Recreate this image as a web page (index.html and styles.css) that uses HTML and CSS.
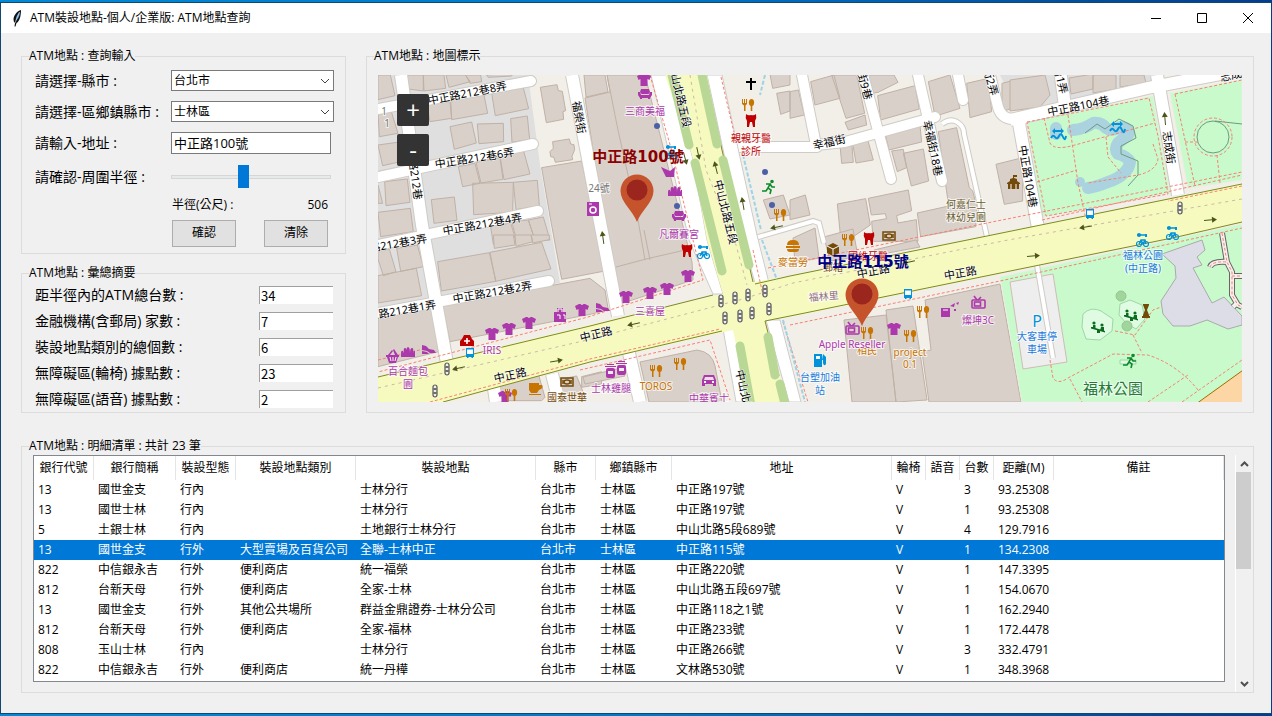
FILE: index.html
```html
<!DOCTYPE html>
<html lang="zh-Hant">
<head>
<meta charset="utf-8">
<title>ATM裝設地點-個人/企業版: ATM地點查詢</title>
<link rel="stylesheet" href="styles.css">
</head>
<body>
<div class="window">
  <header class="titlebar">
    <svg class="feather" viewBox="0 0 10 18" aria-hidden="true"><path d="M9 1C5 2 2 6 1.500 10c0 2 .5 3 1.500 4l-.5 3.500h1L4.500 14C7 13 9 8 9 1z" fill="#111"/><path d="M8 3C5 5 4 8 3.500 12 6 10 8 7 8 3z" fill="#5b9bd5"/><path d="M7.500 3L3 14" stroke="#dcecff" stroke-width=".6"/></svg>
    <h1 class="title">ATM裝設地點-個人/企業版: ATM地點查詢</h1>
    <div class="controls">
      <button type="button" class="control" aria-label="最小化"><svg viewBox="0 0 12 12"><path d="M1 6.500h10"/></svg></button>
      <button type="button" class="control" aria-label="最大化"><svg viewBox="0 0 12 12"><path d="M1.500 1.500h9v9h-9z"/></svg></button>
      <button type="button" class="control" aria-label="關閉"><svg viewBox="0 0 12 12"><path d="M1 1l10 10M11 1L1 11"/></svg></button>
    </div>
  </header>
  <main class="content">
    <div class="upper">
      <div class="side">
        <fieldset class="panel query">
          <legend>ATM地點 : 查詢輸入</legend>
          <label for="city">請選擇-縣市 :</label>
          <div class="select-wrap"><select id="city"><option>台北市</option></select><svg class="chevron" viewBox="0 0 10 6"><path d="M1 1l4 4 4-4"/></svg></div>
          <label for="district">請選擇-區鄉鎮縣市 :</label>
          <div class="select-wrap"><select id="district"><option>士林區</option></select><svg class="chevron" viewBox="0 0 10 6"><path d="M1 1l4 4 4-4"/></svg></div>
          <label for="address">請輸入-地址 :</label>
          <input id="address" class="address" type="text" value="中正路100號">
          <label for="radius">請確認-周圍半徑 :</label>
          <input id="radius" class="slider" type="range" min="100" max="1000" value="506">
          <div class="radius"><span>半徑(公尺) :</span><output for="radius">506</output></div>
          <div class="actions"><button type="button" class="push">確認</button><button type="button" class="push">清除</button></div>
        </fieldset>
        <fieldset class="panel summary">
          <legend>ATM地點 : 彙總摘要</legend>
          <label for="s1">距半徑內的ATM總台數 :</label><input id="s1" type="text" value="34">
          <label for="s2">金融機構(含郵局) 家數 :</label><input id="s2" type="text" value="7">
          <label for="s3">裝設地點類別的總個數 :</label><input id="s3" type="text" value="6">
          <label for="s4">無障礙區(輪椅) 據點數 :</label><input id="s4" type="text" value="23">
          <label for="s5">無障礙區(語音) 據點數 :</label><input id="s5" type="text" value="2">
        </fieldset>
      </div>
      <fieldset class="panel mapbox">
        <legend>ATM地點 : 地圖標示</legend>
        <div class="map">
<svg class="canvas" viewBox="378 75 864 327" role="img" aria-label="地圖">
<defs>
<path id="shirt" d="M-7-4l4-2h1.500q1.500 2 3 0H3l4 2-1.500 4-2-1V6h-7v-7l-2 1z"/>
<g id="food"><path d="M-6-6h1v4h1v-4h1v4h1v-4h1v5l-1.500 1.500V6h-1.500V.5L-6-1z"/><ellipse cx="3.500" cy="-2.500" rx="2.600" ry="3.500"/><path d="M2.700 0h1.600v6H2.700z"/></g>
<g id="sofa"><path d="M-4-5h8l1 3-1.500 2h-7L-5-2z"/><path d="M-7-2h2l1 3h8l1-3h2v3L5 4v1H3V4h-6v1h-2V4l-2-3z"/></g>
<path id="tooth" d="M-5-7q2 2 5 1 3 1 5-1 1 4-1 7v6H2L1 1h-2l-1 5h-2v-6q-2-3-1-7z"/>
<g id="bus"><path d="M-4-5h8v9H3v1H1.500V4h-3v1H-3V4h-1z"/><path d="M-3-3.500h6V1h-6z" fill="#fff"/></g>
<g id="signal"><rect x="-2" y="-6" width="4" height="12" rx="2" fill="#eee" stroke="#555" stroke-width="1.200"/><path d="M-1.500-2h3M-1.500 2h3" stroke="#444" stroke-width="1.500"/></g>
<g id="bike"><circle cx="-3" cy="4" r="2.500" fill="none" stroke="#0092da" stroke-width="1.200"/><circle cx="4" cy="4" r="2.500" fill="none" stroke="#0092da" stroke-width="1.200"/><path d="M-3 4L-1 0h4l1 4M-1 0l2 4 2-4M-5-5H4" fill="none" stroke="#0092da" stroke-width="1.400"/><circle cx="-3" cy="-5" r="2"/><path d="M3-6h2v3H3z"/></g>
<g id="run" fill="none" stroke="#0d8a2a" stroke-width="1.600"><circle cx="3" cy="-5.500" r="1" fill="#0d8a2a"/><path d="M-3-3h4L-1 1l3 2-1 4M-1 1l-2 3h-4M1-3l2 3h3"/></g>
<g id="tv" fill="none" stroke="#ac39ac" stroke-width="1.600"><rect x="-6" y="-3" width="13" height="8" rx="1"/><rect x="-3.500" y="-1" width="6" height="4"/><path d="M-4-7l3 4M3-6L0-3"/></g>
<g id="kid" fill="#0c6b1f"><circle cx="-4" cy="-3" r="1.600"/><circle cx="4" cy="-1" r="1.600"/><path d="M-5-1h2.500v3L7 5v1.500L-7 2.500V1h2zM3 1h3v4H2z"/><path d="M-1 4h3v3h-3z"/></g>
<g id="car"><path d="M-5-6H5l2 5v6H4V3h-8v2h-3v-6z"/><path d="M-4-4h8l1 3H-5z" fill="#eedcea"/><path d="M-5 0h2v2h-2zM3 0h2v2H3z" fill="#fff"/></g>
<g id="shoe"><path d="M-7-4l4 1 3 3 5 1 2 3H1L-2 2-7 1zM-7 2l5 1 2 2h-7z"/></g>
<g id="bread"><path d="M-7 4v-4q0-3 2-2l1 2q-1-5 1-5t2 5q-1-6 1-6t2 6q0-5 2-5t1 5q1-3 2-2v6z"/></g>
<g id="roll"><rect x="-5" y="-3" width="9" height="10" rx="2"/><path d="M-6-5H5v1H-6zM-4-7h7v1h-7z"/><path d="M-3 0h5v3h-5z" fill="#eee"/></g>
<g id="cash" fill="none" stroke="#734a08" stroke-width="1.500"><rect x="-6" y="-4" width="12" height="8"/><ellipse rx="3" ry="2"/><path d="M-4-2v4M4-2v4"/></g>
<g id="duck" fill="#0092da"><path d="M-6-3l3-3v2h6v-2l3 3-3 3v-2h-6v2z"/><path d="M-7 4q2-4 4-1t4-1 4 1 3-1" fill="none" stroke="#0092da" stroke-width="2"/></g>
<path id="arrow" d="M-6-.5H2V-3l5 3-5 3V.5h-8z"/>
<g id="pin"><path d="M0 30C-4 19-16.500 10-16.500-1A16.500 16.500 0 0 1 16.500-1C16.500 10 4 19 0 30z" fill="#c5542d"/><circle cy="-2" r="10.500" fill="#9b261e"/></g>
</defs>
<path class="land" d="M378 75h864v327H378z"/>
<path class="residential" d="M378 75h150l12 90 20 118-138 30-44 6zM1000 75h157l-4 10-133 30z"/>

<!-- buildings, north-west block -->
<g class="buildings" transform="matrix(.3333 0 0 .3333 370 65)">
<path d="M24 30h37l14 62-51 12zM108 30h52v48l-45-6zM160 30h62l5 40-65 8zM228 30h58l15 20-64 17zM287 30h45l3 20-35 5zM350 30l80-5-5 8-70 4z"/>
<path d="M24 140h40l20 65-56 10zM170 110h70l5 50-65 10zM242 105l100-15 11 55-108 19zM365 85l95-17 16 63-100 21zM240 185l65-14 14 63-66 19zM322 177l78-2 1 55-74 6zM422 161l50-8 7 70-53 9z"/>
<path d="M24 240l58-8 0 60-44 10zM44 350l68-8 8 70-72 10zM24 360l14 55h-14zM24 442l97-12 9 70-98 15zM184 404l69-8 8 70-69 9zM265 305l50-10 15 60-52 10zM318 292l72-14 9 65-66 11zM390 275l70-20 20 72-78 17zM308 355l122-3-2 90-117 7zM430 352l72-6 6 76-70 12zM362 485l60-11 18 60-70 4zM425 470l50-5 20 60h-55zM475 465l45-9 20 69h-45z"/>
<path d="M511 67l50-8 4 18 12 2 10 58-8 3 2 23-52 10zM548 230l50-8 4 15 10 2 2 15-8 20 2 10-52 8-4-15-10-2-2-15 10-10zM515 308l120-20 70 330-130 25-35-190z"/>
</g>
<g class="buildings" transform="matrix(.3333 0 0 .3333 370 235)">
<path d="M24 50l34-8 20 68-38 12-16-50zM80 40l62-10 18 65-68 14zM24 122l115-22 16 82-131 22zM203 80l155-27 20 86-164 29zM360 52l155-30 28 80-166 37zM370 0h60l5 30-62 10zM435 0h48l5 20-50 14zM484 0h54v14l-50 10z"/>
<path d="M218 212l282-52 160-30 45 35 10 60-55 13-420 82zM24 250l160-30 22 130-182 45zM385 445l120-28 20 70-10 10H385zM560 435l60-12 30 75h-80zM635 425l60-15v37l-60 10z"/>
</g>
<g class="buildings">
<path d="M585 98l25-6-3-17h38l47 187 1 18-76 25zM584 75h21l3 17-22 5zM607 75l11 55 20 90 7 40M616 267l30-8 48-11M644 230l6 30"/>
<path d="M640 362l57-12q15 2 18 16l7 36h-73zM583 377l38-9 4 8-40 8z"/>
</g>
<!-- buildings, north-east block -->
<g class="buildings" transform="matrix(.3333 0 0 .3333 790 65)">
<path d="M-60 28h60v32l-52 10zM-40 85l40-7v60l-28 10zM0 80l25-5 18 75-43 10zM62 50l70-20 18 70-75 20zM125 30h75l24 115-56 15zM232 30h80l12 22-60 30-30 5zM263 92l112-30 13 70-116 33zM165 172l60-22 5 30-55 15zM285 205l105-24 5 50-98 24zM415 50l65-20 30 100-75 24zM530 55l65-15 10 100-65 18zM150 240l35-8 5 60-35 3zM187 230l45-10 18 65-52 9zM305 258l35-5 10 55-28 12zM340 265l60-13 16 96-52 15zM445 200l55-12 38 180 10 10 8 30-80 15zM0 405l46-15 14 60-60 14zM142 417l85-16 14 79-87 60zM235 400l120-25 10 62-45 15 4 22 55-10 5 65H250l-5-60 45-8-4-15-42 4zM382 444l90-20 90-14-5 75-165 30zM618 298l80-20v130l-55 10zM636 55l60-15v80l-60 20zM-80 405l60-15 20 60-60 12z"/>
</g>
<g class="buildings">
<path d="M1010 80l35-5 5 20-10 12-30 4zM1069 78l24-4v15l-22 5zM1093 75h23v14l-23 4zM1120 75h24l2 8-26 4zM793 238l22-10 4 30-24 5zM824 237l29-8 5 28-28 4zM874 250l42-10 4 7-43 8z"/>
<path d="M844 320l42-5 10 87h-44zM886 310l27-4 14 94-31 2zM925 300l75-16 21 118h-92l-7-50 9-2z"/>
</g>

<!-- green areas and water -->
<path class="park" d="M1027 122l126-26 17 97-128 24zM1170 93l72-13v100l-54 8zM1000 277l242-53v178h-220z"/>
<path class="plaza" d="M1010 282l43-8 14 88-44 7z"/>
<path class="plaza lilac" d="M1162 254l40-14 3 10-8 7 5 8-9 3 19 35 12-6 18 19v9l-14 4-21-9-17 6h-17l-10-12-2-13 15-23-1-12z"/>
<path class="highway" d="M1196 404l50-36v36z"/>
<path class="water" d="M1056 128v6M1073 130q12-1 20-7 8-1 13 5 6 4 14-1 8 0 9 7l-11 9q-4 6 0 11 9 2 12 8-1 7-6 11-6 6-16 9-12 5-20 6"/>
<circle class="pond" cx="1080" cy="182" r="5"/>
<path class="thin" d="M1085 133l12-9 8 5 14-10 14 7 3 12-15 8v8l17 7v14l-10 11"/>
<circle class="thin" cx="1213" cy="137" r="16"/><path class="thin" d="M1215 121l27 3"/>
<g class="playground"><path d="M1083 314q8-8 18-3l12 8-1 12-12 9-14-1-4-12z"/><path d="M1120 304l10-4 12 5 3 14-9 10-10-6-7-8z"/><circle cx="1121" cy="296" r="5"/><circle cx="1127" cy="326" r="5"/><path d="M1120 360h16v4h-16z"/></g>

<!-- side streets: casing under, surface over -->
<g class="casing"><path class="w13" d="M401 75l21 150 25 138M572 75l46 241M629 353l11 49M492 375l4 27M552 374l7 28"/><path class="w12 round" d="M378 109l153-28M378 177l155-33M378 245l160-34M378 313l171-32"/><path class="w12 round" d="M802 75l14 70 29-3 90-25M735 147h82M863 75l28 104M918 75l24 106M958 75l5 25M990 75l8 32q3 11 14 12h12"/><path class="w13" d="M1010 120l142-33 90-17M1018 118l20 110M1060 70l5 36M1157 75l21 120"/><path class="w4" d="M942 124q8-6 15-2t7 12l23 103M738 243l75-22 6 2 5 20M1037 265l16 93"/></g>
<g class="street"><path class="w13" d="M401 75l21 150 25 138M572 75l46 241M629 353l11 49M492 375l4 27M552 374l7 28"/><path class="w12 round" d="M378 109l153-28M378 177l155-33M378 245l160-34M378 313l171-32"/><path class="w12 round" d="M802 75l14 70 29-3 90-25M735 147h82M863 75l28 104M918 75l24 106M958 75l5 25M990 75l8 32q3 11 14 12h12"/><path class="w13" d="M1010 120l142-33 90-17M1018 118l20 110M1060 70l5 36M1157 75l21 120"/><path class="w4" d="M942 124q8-6 15-2t7 12l23 103M738 243l75-22 6 2 5 20M1037 265l16 93"/></g>

<!-- arterial roads -->
<path class="slip" d="M651 75h16l25 80 15 85 16 54h-10l-24-54zM707 75h15l35 160 12 48h-14l-14-50zM723 329h11l14 73h-12zM766 320h14l21 82h-12z"/>
<path class="arterial" d="M665 75h42l14 75 32 132 37-6 197-40 255-52v38l-65 15-157 32-220 46-35 6 22 81h-39l-15-72-143 32-147 40h-65v-25l212-52 133-31-16-54-15-85z"/>
<path class="edge" d="M378 377l212-51 123-31M755 284l35-8 197-40 255-52M443 402l147-40 132-31M765 321l35-7 220-45 157-32 65-15M707 85l15 65 31 132M765 321l14 55"/>
<g class="strip"><path d="M672 75l17 70M702 75l15 69M695 163l27 108M723 160l26 105M740 346l11 60M768 337l7 38M780 384l5 20"/></g>
<path class="centre" d="M690 75l16 95 30 75 11 40M378 388l205-47 160-42 50-16 215-43 234-41"/>

<!-- footways and cycle paths -->
<g class="foot"><path d="M650 75l23 80 10 45 20 80-115 37-210 55M721 77l14 60M753 250l10 45M768 268l219-45 255-51M790 325l210-44 242-53M430 402l160-43 130-30M580 370l130-30 20 60M783 322l25 80M378 360l50-12M1042 220l200-45"/>
<path d="M1027 122l122-24 9 38 10 58-122 22zM1068 115l10 68 7 32M1044 118l6 25q4 8 25 2l80-22M1106 137l2 20 13 16M1037 182l40-12M1153 144l5 15q-2 12-20 16l-50 8M1175 94l67-14M1175 94l20 92M1242 186l-74 15M1185 142h13M1217 155l3 28"/>
<circle cx="1213" cy="137" r="19"/>
<path d="M1050 360l3 18q5 7 15 0l45-24 35 1q30 10 50 35M1070 379l12 23M1148 402l40-27M1182 402l60-42M1115 331l20 4 18-25 8-3M1133 335l9 18"/></g>
<g class="cycle"><path d="M765 75l-5 20M743 155l18 75M762 240l15 40M783 320l22 82"/></g>
<g class="bridge"><path d="M1222 233l5 29 5 10v23l6 10 4 2M1210 267q2-6 17-5M1232 276h12M1238 302l-5 5"/></g>
<g class="deck"><path d="M1222 233l5 29 5 10v23l6 10 4 2M1210 267q2-6 17-5M1232 276h12M1238 302l-5 5"/></g>
<g class="foot"><path d="M1222 233l5 29 5 10v23l6 10 4 2M1210 267q2-6 17-5M1232 276h12"/></g>

<!-- direction arrows and signals -->
<g class="arrows"><use href="#arrow" transform="translate(459 368) rotate(168)"/><use href="#arrow" transform="translate(556 361) rotate(-10)"/><use href="#arrow" transform="translate(634 324) rotate(168)"/><use href="#arrow" transform="translate(698 153) rotate(78)"/><use href="#arrow" transform="translate(716 168) rotate(-104)"/><use href="#arrow" transform="translate(685 158) rotate(75)"/><use href="#arrow" transform="translate(743 204) rotate(-100)"/><use href="#arrow" transform="translate(603 238) rotate(-98)"/><use href="#arrow" transform="translate(777 227) rotate(168)"/><use href="#arrow" transform="translate(1086 227) rotate(170)"/><use href="#arrow" transform="translate(1210 220) rotate(-4)"/><use href="#arrow" transform="translate(1033 256) rotate(-4)"/><use href="#arrow" transform="translate(1165 119) rotate(-95)"/><use href="#arrow" transform="translate(909 262) rotate(168)"/></g>
<use href="#signal" x="447" y="369"/><use href="#signal" x="435" y="391"/><use href="#signal" x="721" y="301"/><use href="#signal" x="735" y="298"/><use href="#signal" x="748" y="295"/><use href="#signal" x="765" y="291"/><use href="#signal" x="725" y="318"/><use href="#signal" x="740" y="316"/><use href="#signal" x="752" y="313"/><use href="#signal" x="769" y="309"/><use href="#signal" x="1180" y="208"/>

<!-- points of interest -->
<g class="shop"><use href="#shirt" x="644" y="80"/><use href="#shirt" x="492" y="334"/><use href="#shirt" x="509" y="329"/><use href="#shirt" x="529" y="323"/><use href="#shirt" x="582" y="310"/><use href="#shirt" x="626" y="297"/><use href="#shirt" x="650" y="293"/><use href="#shirt" x="667" y="289"/><use href="#shirt" x="688" y="276"/><use href="#shirt" x="894" y="329"/><use href="#shirt" x="505" y="397"/><use href="#sofa" x="645" y="94"/><use href="#sofa" x="679" y="216"/><use href="#bread" x="675" y="192"/><use href="#bread" x="408" y="353"/><use href="#shoe" x="429" y="349"/><use href="#shoe" x="603" y="307"/><use href="#roll" x="611" y="371"/><use href="#roll" x="622" y="368"/><use href="#car" x="709" y="381"/><use href="#tv" x="852" y="329"/><use href="#tv" x="978" y="303"/>
<path d="M386 355h13v2h-1l-2 6h-7l-2-6h-1zM388 355l4-5 1 1-3 4zM395 355l-2-5 1-1 4 6zM587 202h12v14h-12zM554 312h3v-4h6v4h3v10h-12zM941 308h9v9h-9zM950 306l5-3-1 4zM956 303l3-1-1 3zM954 309h2v2h-2zM661 167l9 4 5-4-1 10h-8z"/></g>
<path d="M390 357l1 4m2-4v4m3-4l-1 4" stroke="#fff"/><circle cx="593" cy="210" r="3" fill="none" stroke="#fff" stroke-width="1.500"/><path d="M589 204h3M943 310h5M558 312v-3h4v3M557 315h3v4m3-4h2v4" fill="none" stroke="#fff"/>
<g class="amenity"><use href="#food" x="748" y="105"/><use href="#food" x="780" y="215"/><use href="#food" x="848" y="240"/><use href="#food" x="867" y="333"/><use href="#food" x="910" y="336"/><use href="#food" x="923" y="312"/><use href="#food" x="656" y="371"/><use href="#food" x="680" y="364"/><use href="#food" x="511" y="395"/><path d="M529 383h10v2h3q2 3-3 5l-2 3h-6l-2-3zM787 245q0-5 6-5t6 5zM786 246h14v2h-14zM787 249h12q0 3-3 3h-6q-3 0-3-3zM529 394h12v1h-12z"/></g>
<g class="health"><use href="#tooth" x="751" y="121"/><use href="#tooth" x="687" y="251"/><use href="#tooth" x="869" y="239"/><path d="M460 346v-5l2-2 2-4h6l2 4 2 2v5z"/></g><path d="M467 338v6m-3-3h6" stroke="#fff" stroke-width="1.600"/>
<g class="transport"><use href="#bus" x="470" y="353"/><use href="#bus" x="908" y="294"/><use href="#bus" x="1090" y="214"/><use href="#bike" x="703" y="252"/><use href="#bike" x="671" y="152"/><use href="#bike" x="1142" y="240"/><use href="#bike" x="1172" y="233"/><path d="M814 354h8v13h-8zM823 354l3 3v7q-2 3-3-1v-3h-1z"/><path d="M816 356h4v3h-4z" fill="#fff"/></g>
<use href="#duck" x="1058" y="134"/><use href="#duck" x="1117" y="127"/><use href="#run" x="769" y="187"/><use href="#run" x="1130" y="361"/><use href="#kid" x="1098" y="326"/><use href="#kid" x="1131" y="314"/><use href="#cash" x="567" y="382"/><use href="#cash" x="889" y="236"/>
<path d="M751 78v12m-5-8h10" stroke="#000" stroke-width="2"/>
<g class="brown"><path d="M1007 183l3-2v-2l3-1v-3h4v2h-3v1l3 1v2l3 2v1h-1v5h-11v-5h-1zM1143 304h6v1l-2 5 2 5v1h1v2h-8v-2h1v-1l2-5-2-5zM827 246l6-3 6 3v7l-6 3-6-3z"/></g><path d="M827 246l6 3 6-3m-6 3v6M1011 184v5m5-5v5" stroke="#fff" fill="none"/>
<g class="dots"><circle cx="657" cy="126" r="3"/><circle cx="677" cy="206" r="3"/><circle cx="765" cy="172" r="3"/><circle cx="772" cy="205" r="3"/></g>

<!-- street names -->
<g class="road">
<text transform="translate(468 97) rotate(-11)">中正路212巷8弄</text><text transform="translate(475 162) rotate(-9)">中正路212巷6弄</text><text transform="translate(483 228) rotate(-10)">中正路212巷4弄</text><text transform="translate(493 296) rotate(-10)">中正路212巷2弄</text><text transform="translate(388 249) rotate(-10)">中正路212巷3弄</text><text transform="translate(397 315) rotate(-10)">中正路212巷1弄</text>
<text transform="translate(410 169) rotate(82)">中正路212巷</text><text transform="translate(575 118) rotate(80)">福榮街</text><text transform="translate(676 96) rotate(77)">中山北路五段</text><text transform="translate(722 213) rotate(76)">中山北路五段</text><text transform="translate(743 403) rotate(77)">中山北路五段</text>
<text transform="translate(511 379) rotate(-12)">中正路</text><text transform="translate(597 338) rotate(-14)">中正路</text><text transform="translate(874 275) rotate(-11)">中正路</text><text transform="translate(961 277) rotate(-10)">中正路</text>
<text transform="translate(830 146) rotate(-12)">幸福街</text><text transform="translate(858 76) rotate(75)">幸福街9巷</text><text transform="translate(929 149) rotate(78)">幸福街18巷</text><text transform="translate(984 72) rotate(75)">幸福街2弄</text><text transform="translate(1054 70) rotate(76)">幸福街1弄</text><text transform="translate(1079 110) rotate(-11)">中正路104巷</text><text transform="translate(1024 177) rotate(80)">中正路104巷</text><text transform="translate(1165 148) rotate(82)">志成街</text><text transform="translate(1237 78) rotate(-12)">志成街</text></g>
<g class="poi">
<g class="shop"><text x="645" y="115">三商美福</text><text x="679" y="238">凡爾賽宮</text><text x="492" y="354">IRIS</text><text x="408" y="375">百合麵包</text><text x="408" y="388">園</text><text x="650" y="315">三喜屋</text><text x="611" y="392">士林雞腿</text><text x="709" y="402">中華賓士</text><text x="978" y="324">燦坤3C</text></g>
<g class="health"><text x="751" y="142">親親牙醫</text><text x="751" y="155">診所</text><text x="868" y="260">國維牙醫</text></g>
<g class="amenity"><text x="793" y="266">麥當勞</text><text x="656" y="390">TOROS</text><text x="867" y="354">相民</text><text x="910" y="356">project</text><text x="910" y="368">0.1</text></g>
<g class="shop"><text x="852" y="348">Apple Reseller</text></g>
<g class="brown"><text x="567" y="401">國泰世華</text><text x="833" y="271">郵箱</text></g>
<g class="school"><text x="966" y="208">何嘉仁士</text><text x="966" y="221">林幼兒園</text></g>
<g class="blue"><text x="820" y="381">台塑加油</text><text x="820" y="394">站</text><text x="1143" y="259">福林公園</text><text x="1143" y="272">(中正路)</text><text x="1037" y="340">大客車停</text><text x="1037" y="353">車場</text></g>
<g class="grey"><text x="599" y="192">24號</text><text x="384" y="115">1</text><text x="387" y="127">1</text></g>
<text class="village" transform="translate(824 300) rotate(-5)">福林里</text>
<text class="parkname" x="1113" y="394">福林公園</text><text class="parking" x="1037" y="327">P</text></g>

<use href="#pin" x="637" y="192"/><use href="#pin" x="862" y="296"/>
<text class="pinlabel red" x="638" y="162">中正路100號</text><text class="pinlabel navy" x="863" y="267">中正路115號</text>
</svg>
          <div class="zoom"><button type="button" aria-label="放大">+</button><button type="button" aria-label="縮小">-</button></div>
        </div>
      </fieldset>
    </div>
    <fieldset class="panel detail">
      <legend>ATM地點 : 明細清單 : 共計 23 筆</legend>
      <div class="listing">
        <div class="tablebox">
        <table>
          <colgroup><col class="c60"><col class="c82"><col class="c60"><col class="c120"><col class="c180"><col class="c60"><col class="c76"><col class="c220"><col class="c34"><col class="c34"><col class="c34"><col class="c60"><col></colgroup>
          <thead><tr><th>銀行代號</th><th>銀行簡稱</th><th>裝設型態</th><th>裝設地點類別</th><th>裝設地點</th><th>縣市</th><th>鄉鎮縣市</th><th>地址</th><th>輪椅</th><th>語音</th><th>台數</th><th>距離(M)</th><th>備註</th></tr></thead>
          <tbody>
          <tr><td>13</td><td>國世金支</td><td>行內</td><td></td><td>士林分行</td><td>台北市</td><td>士林區</td><td>中正路197號</td><td>V</td><td></td><td>3</td><td>93.25308</td><td></td></tr>
          <tr><td>13</td><td>國世士林</td><td>行內</td><td></td><td>士林分行</td><td>台北市</td><td>士林區</td><td>中正路197號</td><td>V</td><td></td><td>1</td><td>93.25308</td><td></td></tr>
          <tr><td>5</td><td>土銀士林</td><td>行內</td><td></td><td>土地銀行士林分行</td><td>台北市</td><td>士林區</td><td>中山北路5段689號</td><td>V</td><td></td><td>4</td><td>129.7916</td><td></td></tr>
          <tr class="selected"><td>13</td><td>國世金支</td><td>行外</td><td>大型賣場及百貨公司</td><td>全聯-士林中正</td><td>台北市</td><td>士林區</td><td>中正路115號</td><td>V</td><td></td><td>1</td><td>134.2308</td><td></td></tr>
          <tr><td>822</td><td>中信銀永吉</td><td>行外</td><td>便利商店</td><td>統一福榮</td><td>台北市</td><td>士林區</td><td>中正路220號</td><td>V</td><td></td><td>1</td><td>147.3395</td><td></td></tr>
          <tr><td>812</td><td>台新天母</td><td>行外</td><td>便利商店</td><td>全家-士林</td><td>台北市</td><td>士林區</td><td>中山北路五段697號</td><td>V</td><td></td><td>1</td><td>154.0670</td><td></td></tr>
          <tr><td>13</td><td>國世金支</td><td>行外</td><td>其他公共場所</td><td>群益金鼎證券-士林分公司</td><td>台北市</td><td>士林區</td><td>中正路118之1號</td><td>V</td><td></td><td>1</td><td>162.2940</td><td></td></tr>
          <tr><td>812</td><td>台新天母</td><td>行外</td><td>便利商店</td><td>全家-福林</td><td>台北市</td><td>士林區</td><td>中正路233號</td><td>V</td><td></td><td>1</td><td>172.4478</td><td></td></tr>
          <tr><td>808</td><td>玉山士林</td><td>行內</td><td></td><td>士林分行</td><td>台北市</td><td>士林區</td><td>中正路266號</td><td>V</td><td></td><td>3</td><td>332.4791</td><td></td></tr>
          <tr><td>822</td><td>中信銀永吉</td><td>行外</td><td>便利商店</td><td>統一丹樺</td><td>台北市</td><td>士林區</td><td>文林路530號</td><td>V</td><td></td><td>1</td><td>348.3968</td><td></td></tr>
          </tbody>
        </table>
        </div>
        <div class="scrollbar">
          <button type="button" aria-label="向上捲動"><svg viewBox="0 0 9 6"><path d="M1 5l3.500-3.500L8 5"/></svg></button>
          <div class="track"><div class="thumb"></div></div>
          <button type="button" aria-label="向下捲動"><svg viewBox="0 0 9 6"><path d="M1 1l3.500 3.500L8 1"/></svg></button>
        </div>
      </div>
    </fieldset>
  </main>
</div>
</body>
</html>
```
FILE: styles.css
```css
* { box-sizing: border-box; }
body {
  margin: 0;
  min-height: 100vh;
  padding: 2px 1px 2px 0;
  background: linear-gradient(90deg, #0089d6, #0078c8 50%, #053c8c);
  color: #000;
  font: 12px/18px "Open Sans", "Noto Sans CJK TC", sans-serif;
}
button, input, select { font: inherit; color: inherit; margin: 0; }
.window {
  display: flex;
  flex-direction: column;
  min-height: calc(100vh - 4px);
  border: 1px solid #10496f;
  border-right: 0;
  background: #f0f0f0;
}

/* title bar */
.titlebar { display: flex; align-items: center; height: 30px; background: #fff; }
.feather { width: 10px; height: 18px; margin: 0 8px 0 11px; }
.title { flex: 1; margin: 0; font-size: 12px; font-weight: 400; }
.controls { display: flex; }
.control { width: 46px; height: 30px; padding: 0; border: 0; background: none; }
.control svg { display: block; width: 12px; height: 12px; margin: 0 auto; fill: none; stroke: #000; }

/* panels */
.content { display: flex; flex-direction: column; gap: 24px; padding: 14px 17px 20px 20px; }
.upper { display: grid; grid-template-columns: 325px minmax(0, 1fr); gap: 20px; }
.side { display: flex; flex-direction: column; gap: 10px; }
.panel { min-width: 0; margin: 0; border: 1px solid #dcdcdc; }
.panel legend { height: 18px; margin-left: -4px; padding: 0; line-height: 18px; }
.query label, .summary label { font-size: 14px; line-height: 20px; white-space: nowrap; }
.query {
  display: grid;
  grid-template-columns: 136px 163px;
  grid-template-rows: 31px 31px 31px 38px 17px 40px;
  align-items: center;
  padding: 0 11px 0 13px;
}
.panel.query legend, .panel.summary legend { margin-left: -6px; }
.select-wrap { position: relative; }
.select-wrap select {
  appearance: none;
  display: block;
  width: 100%;
  height: 21px;
  padding: 0 20px 0 2px;
  border: 1px solid #7a7a7a;
  border-radius: 0;
  background: #fff;
}
.chevron { position: absolute; top: 8px; right: 4px; width: 10px; height: 6px; fill: none; stroke: #444; pointer-events: none; }
.address { width: 160px; height: 22px; padding: 0 2px; border: 1px solid #7a7a7a; background: #fff; font-size: 13px; }
.slider { appearance: none; width: 160px; height: 23px; background: none; }
.slider::-webkit-slider-runnable-track { height: 4px; border: 1px solid #d6d6d6; background: #e7eaea; }
.slider::-webkit-slider-thumb { appearance: none; width: 11px; height: 23px; margin-top: -11px; background: #0078d7; }
.radius, .actions { grid-column: 2; display: flex; justify-content: space-between; padding: 0 6px 0 1px; }
.push { width: 64px; height: 27px; padding: 0; border: 1px solid #adadad; background: #e1e1e1; }
.summary {
  display: grid;
  grid-template-columns: 1fr 74px;
  grid-auto-rows: 26px;
  align-items: center;
  padding: 0 12px 0 13px;
}
.summary input {
  width: 74px;
  height: 18px;
  padding: 0 1px;
  border: 0 solid #a0a0a0;
  border-width: 1px 0 0 1px;
  background: #fff;
  font-family: "Noto Sans CJK TC", sans-serif;
  font-size: 13px;
  line-height: 16px;
}

/* map */
.mapbox { padding: 10px 11px; }
.map { position: relative; overflow: hidden; }
.canvas { display: block; width: 100%; height: auto; font-family: "Noto Sans", "Noto Sans CJK TC", sans-serif; }
.land { fill: #f2efe9; }
.residential { fill: #dfdfdf; }
.buildings path { fill: #d9d0c9; stroke: #c0b1a6; vector-effect: non-scaling-stroke; }
.park { fill: #c8facc; stroke: #e6f0dd; }
.plaza { fill: #eee; stroke: #cdbdb5; }
.lilac { fill: #dddde8; stroke: #aaa; }
.highway { fill: #fcd6a4; stroke: #a06b00; }
.water { fill: none; stroke: #aad3df; stroke-width: 12; stroke-linecap: round; stroke-linejoin: round; }
.pond { fill: #aad3df; }
.thin { fill: none; stroke: #6f9a81; }
.playground { fill: #dffce2; stroke: #9dd8a4; }
.playground circle { fill: #a0d69c; stroke: #96c590; }
.casing, .street, .strip, .foot, .cycle, .bridge, .deck, .edge, .centre { fill: none; }
.casing { stroke: #cfcbc5; }
.street { stroke: #fff; }
.round { stroke-linecap: round; stroke-linejoin: round; }
.casing .w13 { stroke-width: 14; }
.casing .w12 { stroke-width: 12; }
.casing .w4 { stroke-width: 6; }
.street .w13 { stroke-width: 12; }
.street .w12 { stroke-width: 10; }
.street .w4 { stroke-width: 4; }
.slip { fill: #fff; stroke: #ccc; }
.arterial { fill: #f7fabf; }
.edge { stroke: #7f8b1b; stroke-width: 1; }
.strip { stroke: #b9d895; stroke-width: 9; stroke-linecap: round; }
.centre { stroke: #c9b9aa; stroke-dasharray: 3 4; }
.foot { stroke: #fa8072; stroke-dasharray: 3 2; }
.cycle { stroke: #9ed3e4; stroke-width: 2; stroke-dasharray: 4 2; }
.bridge { stroke: #666; stroke-width: 6; }
.deck { stroke: #f4f0ee; stroke-width: 4; }
.arrows { fill: #4b5517; }
.shop { fill: #ac39ac; }
.amenity { fill: #c77400; }
.health { fill: #bf0000; }
.transport { fill: #0092da; }
.brown { fill: #734a08; }
.dots { fill: #4d5fa5; }
.school { fill: #6b6030; }
.blue { fill: #1b7bdc; }
.grey { fill: #777; }
.road text { font-size: 11px; text-anchor: middle; fill: #000; stroke: #fff; stroke-width: 1px; paint-order: stroke; }
.poi text { font-size: 10px; text-anchor: middle; stroke: #fff; stroke-opacity: .7; stroke-width: 2px; paint-order: stroke; }
.poi .village { fill: #91708a; }
.poi .parkname { font-size: 15px; fill: #257a35; }
.poi .parking { font-size: 16px; fill: #0092da; }
.pinlabel { font: 700 15px "DejaVu Sans", "Noto Sans CJK TC", sans-serif; text-anchor: middle; }
.red { fill: #8b0000; }
.navy { fill: #00008b; }
.zoom { position: absolute; left: 19px; top: 19px; display: grid; gap: 8px; }
.zoom button { width: 32px; height: 32px; padding: 0; border: 0; border-radius: 2px; background: #333; color: #fff; font-size: 24px; line-height: 32px; }

/* list */
.detail { padding: 0 1px 0 11px; }
.listing { display: flex; gap: 10px; }
.tablebox { flex: 1; min-width: 0; margin-bottom: 10px; border: 1px solid #828790; background: #fff; }
table { width: 100%; table-layout: fixed; border-collapse: separate; border-spacing: 0; margin-bottom: 1px; }
.c34 { width: 34px; }
.c60 { width: 60px; }
.c76 { width: 76px; }
.c82 { width: 82px; }
.c120 { width: 120px; }
.c180 { width: 180px; }
.c220 { width: 220px; }
th { height: 24px; padding: 0; border-right: 1px solid #e5e5e5; font-weight: 400; white-space: nowrap; }
td { height: 20px; padding: 0 0 0 4px; white-space: nowrap; }
.selected td { background: #0078d7; color: #fff; }
.scrollbar { display: flex; flex-direction: column; width: 17px; border-left: 1px solid #fff; }
.scrollbar button { height: 17px; padding: 0; border: 0; background: none; }
.scrollbar svg { display: block; width: 9px; height: 6px; margin: 0 auto; fill: none; stroke: #505050; stroke-width: 2; }
.track { flex: 1; }
.thumb { width: 15px; height: 97px; background: #cdcdcd; }
```
